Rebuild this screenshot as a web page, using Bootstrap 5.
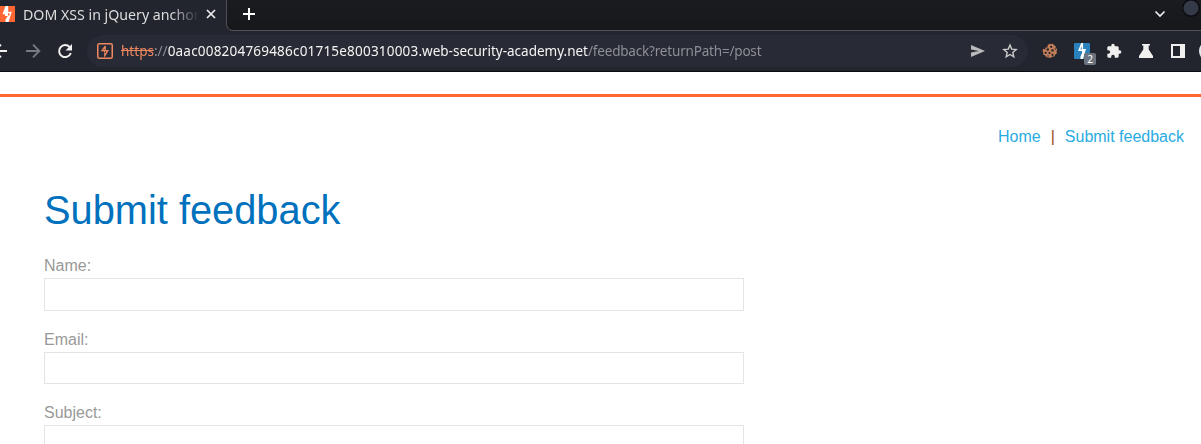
<!DOCTYPE html>
<html lang="en">
<head>
<meta charset="utf-8">
<title>DOM XSS in jQuery anchor</title>
<link href="https://cdn.jsdelivr.net/npm/bootstrap@5.3.0/dist/css/bootstrap.min.css" rel="stylesheet">
<style>
html,body{height:100%;overflow:hidden}
body{font-family:"Liberation Sans",Arial,sans-serif;background:#fff;display:flex;flex-direction:column}
main{flex:1;min-height:0;overflow:hidden}
.chrome{font-family:"Noto Sans",sans-serif;background:#23252e;height:72px;flex:none;border-bottom:1px solid #0b0c10}
.chrome svg{display:block;flex:none}
.tabstrip{height:31px;background:#23252e}
.tab-active{width:226px;height:31px;background:#23252e}
.tab-title{margin:4px 0 0 7px;width:176px;height:20px;line-height:20px;color:#dcdddd;white-space:nowrap;-webkit-mask-image:linear-gradient(90deg,#000 148px,transparent 176px);mask-image:linear-gradient(90deg,#000 148px,transparent 176px)}
.tab-title span{display:inline-block;font-size:15px;line-height:20px;transform:scaleX(.945);transform-origin:left}
.strip-rest{height:31px;background:linear-gradient(#1b1c21,#16171b);border-left:1px solid #4d4f54;border-bottom:1px solid #505257;border-bottom-left-radius:7px}
.toolbar{height:40px}
.cell{width:32px;height:32px;display:flex;align-items:center;justify-content:center;flex:none}
.nav-cells{margin-left:-15px;width:102px;flex:none}
.address{width:941px;height:32px;background:#282a35;padding-left:10px;flex:none}
.url{margin:-2px 0 0 8px;width:640px;font-size:14.6px;line-height:20px;white-space:nowrap;color:#f4f4f3;transform:scaleX(.9275);transform-origin:left}
.url .dim{color:#8d8f94}
.url .insecure{color:#ee8860;text-decoration:line-through}
.url .lab-id{letter-spacing:.2px}
.url .domain{letter-spacing:-.02px}
.url .path{letter-spacing:-.22px}
.count{right:-6px;bottom:-6px;width:12px;height:12px;background:#6b747e;border-radius:2px;color:#fff;font-size:10px;line-height:12px;text-align:center}
.topline{margin-top:22px;height:3px;background:#ff6633}
.links{height:24px;margin-top:28px;padding-right:17px;font-size:16px;line-height:24px}
.links a{color:#29abe2;text-decoration:none}
.links span{color:#9c4a20;margin:0 10px}
.feedback{margin-left:44px;width:700px}
.feedback h1{color:#0071bc;font-size:39.8px;line-height:48px;font-weight:400;margin:37px 0 0;height:70px}
.feedback label{display:block;color:#999;font-size:16px;line-height:20px;height:22px}
.feedback .form-control{height:32.5px;border:1px solid #e4e4e4;border-radius:0;margin-bottom:19px;padding:6px}
</style>
<script src="https://cdn.jsdelivr.net/npm/bootstrap@5.3.0/dist/js/bootstrap.bundle.min.js"></script>
</head>
<body>
<header class="chrome">
  <div class="tabstrip d-flex">
    <div class="tab-active d-flex align-items-start flex-shrink-0">
      <svg width="16" height="16" viewBox="0 0 16 16" style="margin:6px 0 0 0"><path fill="#ff6633" d="M0 0h15v16H0z"/><path fill="#fff" fill-rule="evenodd" d="M5.500 0h2.700v5.800h3.600L8.500 16H5.500v-2.500L7.800 10H5V8.200H2.500zM8 7.200v2.300h1.500V7.200z"/></svg>
      <div class="tab-title"><span>DOM XSS in jQuery anchor</span></div>
      <svg width="10" height="10" viewBox="0 0 10 10" style="margin:9px 0 0 7px" stroke="#eee" stroke-width="1.7"><path d="m1 1 8 8M9 1 1 9"/></svg>
    </div>
    <div class="strip-rest d-flex flex-grow-1">
      <svg width="12" height="12" viewBox="0 0 12 12" style="margin:8px 0 0 16px" stroke="#fff" stroke-width="2"><path d="M6 0v12M0 6h12"/></svg>
      <svg class="ms-auto" width="12" height="8" viewBox="0 0 12 8" style="margin-top:10px" fill="none" stroke="#eee" stroke-width="1.7"><path d="m1.500 1.500 4.500 4.500 4.500-4.500"/></svg>
      <svg width="18" height="18" viewBox="0 0 18 18" style="margin:-1px 1px 0 16px"><circle cx="9" cy="9" r="8.200" fill="#353a49" stroke="#090a0e" stroke-width="1.200"/></svg>
    </div>
  </div>
  <div class="toolbar d-flex align-items-center overflow-hidden">
    <div class="nav-cells d-flex">
      <div class="cell"><svg width="16" height="16" viewBox="0 0 16 16" fill="none" stroke="#f0f0ee" stroke-width="1.900"><path d="M14 8H2.500M8 1.700 1.700 8 8 14.300"/></svg></div>
      <div class="cell"><svg width="16" height="16" viewBox="0 0 16 16" fill="none" stroke="#777980" stroke-width="1.900"><path d="M1 8h12.500M8 1.700 14.300 8 8 14.300"/></svg></div>
      <div class="cell"><svg width="16" height="16" viewBox="0 0 16 16"><path d="M12.700 4.200A6 6 0 1 0 13.800 10" fill="none" stroke="#f0f0ee" stroke-width="2"/><path fill="#f0f0ee" d="M15 1v6.500H8.500z"/></svg></div>
    </div>
    <div class="address rounded-pill d-flex align-items-center">
      <svg width="16" height="16" viewBox="0 0 16 16"><rect x=".75" y=".75" width="14.500" height="14.500" rx="1.500" fill="none" stroke="#ee8860" stroke-width="1.500"/><path fill="none" stroke="#ee8860" stroke-width="1.300" d="M8.200 3 5 7.600h2.600v1.800M8.200 3v4M7.800 7.600h3L7.800 12.600V10"/></svg>
      <div class="url"><span class="dim"><span class="insecure">https</span>://</span><span class="lab-id">0aac008204769486c01715e800310003</span><span class="domain">.web-security-academy.net</span><span class="dim path">/feedback?returnPath=/post</span></div>
      <div class="ms-auto cell"><svg width="16" height="16" viewBox="0 0 16 16"><path fill="#b9babb" d="M1 2 15 8 1 14V9.400L9 8 1 6.600z"/></svg></div>
      <div class="cell" style="margin-right:2px"><svg width="16" height="16" viewBox="0 0 16 16"><path fill="none" stroke="#cbccca" stroke-width="1.400" d="m8 2 1.700 4.100 4.500.4-3.400 2.900 1 4.400L8 11.500l-3.800 2.300 1-4.400-3.400-2.900 4.500-.4z"/></svg></div>
    </div>
    <div class="d-flex" style="margin-left:6px">
      <div class="cell"><svg width="16" height="16" viewBox="0 0 16 16"><path fill="#c17e58" d="M7.300.8l2 .5 1.500-.8 1 1.600 1.700.9.3 2.100 1.400 1.200-.6 2.100.2 2-1.700 1.300-.8 1.900-2.100.2-1.800 1.200-2-.6-2-.1-1.300-1.700-1.800-1-.1-2.100L.5 7.700l.8-2 2 .7.1-2 2.200.2-.1-2.200z"/><g fill="#20212a"><circle cx="9.200" cy="3.800" r="1.100"/><circle cx="5.800" cy="6.500" r="1.200"/><circle cx="10.500" cy="7.400" r="1.200"/><circle cx="3.700" cy="9.800" r="1.100"/><circle cx="7.500" cy="10" r="1.100"/><circle cx="10.500" cy="11.800" r="1.100"/><circle cx="13.200" cy="6" r=".7"/><circle cx="6" cy="13" r=".7"/></g></svg></div>
      <div class="cell"><div class="position-relative"><svg width="16" height="16" viewBox="0 0 16 16"><rect width="16" height="16" rx="1" fill="#2981bd"/><path fill="#fff" fill-rule="evenodd" d="M7.200 0h1.900v6H12L9 16H6.500v-2.500L8 10V8H4zM7.800 3.500 6.300 6.500h1.500z"/></svg><div class="count position-absolute">2</div></div></div>
      <div class="cell"><svg width="16" height="16" viewBox="0 0 24 24"><path fill="#f0f0ee" d="M20.500 11H19V7c0-1.100-.9-2-2-2h-4V3.500a2.500 2.500 0 0 0-5 0V5H4c-1.100 0-2 .9-2 2v3.800h1.500a2.700 2.700 0 0 1 0 5.400H2V20c0 1.100.9 2 2 2h3.800v-1.500a2.700 2.700 0 0 1 5.400 0V22H17c1.100 0 2-.9 2-2v-4h1.500a2.500 2.500 0 0 0 0-5z"/></svg></div>
      <div class="cell"><svg width="16" height="16" viewBox="0 0 16 16"><path fill="#f0f0ee" d="M4 1h8v1.600h-1.300v4L15 13v2H1v-2l4.300-6.400v-4H4z"/></svg></div>
      <div class="cell"><svg width="16" height="16" viewBox="0 0 16 16"><path fill="#f0f0ee" fill-rule="evenodd" d="M1 1h14v14H1zM3 3v10h7V3z"/></svg></div>
      <div class="cell"><svg width="22" height="22" viewBox="0 0 22 22"><circle cx="11" cy="11" r="11" fill="#e7e8e9"/></svg></div>
    </div>
  </div>
</header>
<main>
  <div class="topline"></div>
  <nav class="links d-flex justify-content-end"><a href="#">Home</a><span>|</span><a href="#">Submit feedback</a></nav>
  <form class="feedback">
    <h1>Submit feedback</h1>
    <label for="name">Name:</label><input class="form-control" id="name">
    <label for="email">Email:</label><input class="form-control" id="email">
    <label for="subject">Subject:</label><input class="form-control" id="subject">
  </form>
</main>
</body>
</html>
